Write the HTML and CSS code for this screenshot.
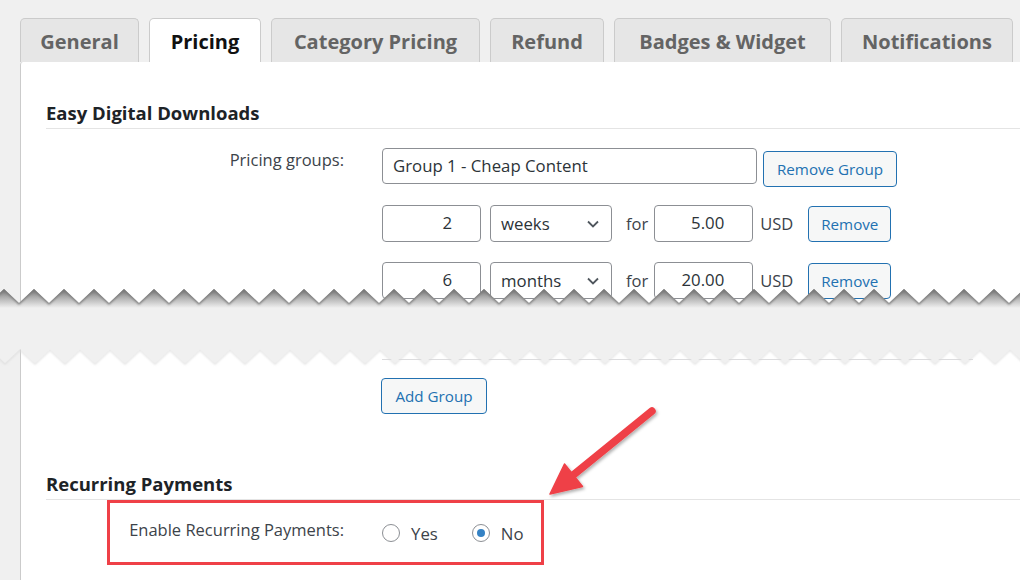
FILE: index.html
```html
<!DOCTYPE html>
<html lang="en">
<head>
<meta charset="utf-8">
<title>Pricing settings</title>
<link rel="stylesheet" href="styles.css">
</head>
<body>
<div class="page">
  <nav class="tabs">
    <div class="tab">General</div>
    <div class="tab active">Pricing</div>
    <div class="tab">Category Pricing</div>
    <div class="tab">Refund</div>
    <div class="tab">Badges &amp; Widget</div>
    <div class="tab">Notifications</div>
  </nav>

  <div class="panel panel-top">
    <h2 class="section-title">Easy Digital Downloads</h2>
    <div class="form-row">
      <div class="label">Pricing groups:</div>
      <div class="field">
        <div class="line line-group">
          <div class="input group-name">Group 1 - Cheap Content</div>
          <div class="btn btn-group">Remove Group</div>
        </div>
        <div class="line line-price">
          <div class="input num">2</div>
          <div class="select">weeks<svg class="chev" viewBox="0 0 12 8"><path d="M1 1.5 6 6.5 11 1.5"/></svg></div>
          <span class="word word-for">for</span>
          <div class="input num price">5.00</div>
          <span class="word word-cur">USD</span>
          <div class="btn btn-remove">Remove</div>
        </div>
        <div class="line line-price">
          <div class="input num">6</div>
          <div class="select">months<svg class="chev" viewBox="0 0 12 8"><path d="M1 1.5 6 6.5 11 1.5"/></svg></div>
          <span class="word word-for">for</span>
          <div class="input num price">20.00</div>
          <span class="word word-cur">USD</span>
          <div class="btn btn-remove">Remove</div>
        </div>
      </div>
    </div>
  </div>

  <div class="cut">
    <svg class="tear" viewBox="0 0 1020 74" preserveAspectRatio="none">
      <defs>
        <clipPath id="mtn">
          <polygon points="-11,14 4,0 19,14 34,0 49,14 64,0 79,14 94,0 109,14 124,0 139,14 154,0 169,14 184,0 199,14 214,0 229,14 244,0 259,14 274,0 289,14 304,0 319,14 334,0 349,14 364,0 379,14 394,0 409,14 424,0 439,14 454,0 469,14 484,0 499,14 514,0 529,14 544,0 559,14 574,0 589,14 604,0 619,14 634,0 649,14 664,0 679,14 694,0 709,14 724,0 739,14 754,0 769,14 784,0 799,14 814,0 829,14 844,0 859,14 874,0 889,14 904,0 919,14 934,0 949,14 964,0 979,14 994,0 1009,14 1024,0 1039,14 1039,40 -11,40"/>
        </clipPath>
        <linearGradient id="shade" gradientUnits="userSpaceOnUse" x1="0" y1="0" x2="0" y2="19">
          <stop offset="0" stop-color="#6f6f6f"/>
          <stop offset="0.4" stop-color="#a9a9a9"/>
          <stop offset="1" stop-color="#f0f0f0"/>
        </linearGradient>
        <filter id="soft" x="-5%" y="-50%" width="110%" height="200%">
          <feGaussianBlur stdDeviation="0.9"/>
        </filter>
        <filter id="softer" x="-5%" y="-50%" width="110%" height="200%">
          <feGaussianBlur stdDeviation="1.2"/>
        </filter>
      </defs>
      <polygon class="mtn-fill" points="-11,14 4,0 19,14 34,0 49,14 64,0 79,14 94,0 109,14 124,0 139,14 154,0 169,14 184,0 199,14 214,0 229,14 244,0 259,14 274,0 289,14 304,0 319,14 334,0 349,14 364,0 379,14 394,0 409,14 424,0 439,14 454,0 469,14 484,0 499,14 514,0 529,14 544,0 559,14 574,0 589,14 604,0 619,14 634,0 649,14 664,0 679,14 694,0 709,14 724,0 739,14 754,0 769,14 784,0 799,14 814,0 829,14 844,0 859,14 874,0 889,14 904,0 919,14 934,0 949,14 964,0 979,14 994,0 1009,14 1024,0 1039,14 1039,40 -11,40"/>
      <g clip-path="url(#mtn)">
        <polyline class="tear-shadow" filter="url(#soft)" points="-11,14 4,0 19,14 34,0 49,14 64,0 79,14 94,0 109,14 124,0 139,14 154,0 169,14 184,0 199,14 214,0 229,14 244,0 259,14 274,0 289,14 304,0 319,14 334,0 349,14 364,0 379,14 394,0 409,14 424,0 439,14 454,0 469,14 484,0 499,14 514,0 529,14 544,0 559,14 574,0 589,14 604,0 619,14 634,0 649,14 664,0 679,14 694,0 709,14 724,0 739,14 754,0 769,14 784,0 799,14 814,0 829,14 844,0 859,14 874,0 889,14 904,0 919,14 934,0 949,14 964,0 979,14 994,0 1009,14 1024,0 1039,14"/>
      </g>
      <polyline class="tear-edge-low" filter="url(#softer)" transform="translate(0,0.8)" points="-10,60 5,74 20,60 35,74 50,60 65,74 80,60 95,74 110,60 125,74 140,60 155,74 170,60 185,74 200,60 215,74 230,60 245,74 260,60 275,74 290,60 305,74 320,60 335,74 350,60 365,74 380,60 395,74 410,60 425,74 440,60 455,74 470,60 485,74 500,60 515,74 530,60 545,74 560,60 575,74 590,60 605,74 620,60 635,74 650,60 665,74 680,60 695,74 710,60 725,74 740,60 755,74 770,60 785,74 800,60 815,74 830,60 845,74 860,60 875,74 890,60 905,74 920,60 935,74 950,60 965,74 980,60 995,74 1010,60 1025,74 1040,60"/>
      <polygon class="paper-gap" points="-10,40 -10,60 5,74 20,60 35,74 50,60 65,74 80,60 95,74 110,60 125,74 140,60 155,74 170,60 185,74 200,60 215,74 230,60 245,74 260,60 275,74 290,60 305,74 320,60 335,74 350,60 365,74 380,60 395,74 410,60 425,74 440,60 455,74 470,60 485,74 500,60 515,74 530,60 545,74 560,60 575,74 590,60 605,74 620,60 635,74 650,60 665,74 680,60 695,74 710,60 725,74 740,60 755,74 770,60 785,74 800,60 815,74 830,60 845,74 860,60 875,74 890,60 905,74 920,60 935,74 950,60 965,74 980,60 995,74 1010,60 1025,74 1040,60 1040,40"/>
    </svg>
  </div>

  <div class="panel panel-bottom">
    <div class="field-only">
      <div class="group-end"></div>
      <div class="btn btn-add">Add Group</div>
    </div>
    <h2 class="section-title title-recurring">Recurring Payments</h2>
    <div class="form-row row-recurring">
      <div class="label">Enable Recurring Payments:</div>
      <div class="radios">
        <span class="radio"></span><span class="radio-label">Yes</span>
        <span class="radio checked"></span><span class="radio-label">No</span>
      </div>
    </div>
  </div>

  <div class="highlight"></div>
  <svg class="arrow" viewBox="530 395 140 115">
    <defs>
      <filter id="ashadow" x="-20%" y="-20%" width="150%" height="150%">
        <feDropShadow dx="1.5" dy="2" stdDeviation="1.8" flood-color="#000" flood-opacity="0.3"/>
      </filter>
    </defs>
    <g filter="url(#ashadow)" class="arrow-g">
      <line x1="652" y1="411" x2="572" y2="476"/>
      <polygon points="550,494 564.5,464 582.5,486.5"/>
    </g>
  </svg>
</div>
</body>
</html>
```

FILE: styles.css
```css
* { box-sizing: border-box; }

html, body {
  margin: 0;
  padding: 0;
  background: #f0f0f0;
}

body {
  font-family: "Open Sans", "Noto Sans", sans-serif;
  color: #3c434a;
  width: 1020px;
  height: 580px;
  overflow: hidden;
}

.page {
  position: relative;
  width: 1020px;
  height: 580px;
  overflow: hidden;
}

/* Tabs */
.tabs {
  display: grid;
  grid-template-columns: 119px 112px 209px 114px 217px 172px;
  column-gap: 10px;
  padding: 18px 0 0 20px;
}

.tab {
  height: 44px;
  border: 1px solid #cbcbcb;
  border-bottom: none;
  border-radius: 5px 5px 0 0;
  background: #e6e6e6;
  color: #646464;
  font-size: 20px;
  font-weight: 700;
  line-height: 46px;
  text-align: center;
  white-space: nowrap;
}

.tab.active {
  background: #fff;
  color: #111;
}

/* Panels */
.panel {
  margin-left: 20px;
  background: #fff;
  border-left: 1px solid #cbcbcb;
  padding-left: 25px;
}

.panel-top {
  height: 241px;
  overflow: hidden;
  border-top-left-radius: 3px;
}

.panel-bottom {
  height: 231px;
}

.section-title {
  margin: 39px 0 0;
  padding-bottom: 3px;
  font-size: 18.5px;
  line-height: 24px;
  font-weight: 700;
  color: #1d2327;
  border-bottom: 1px solid #e4e4e4;
}

.form-row {
  display: grid;
  grid-template-columns: 298px 1fr;
  column-gap: 38px;
  margin-top: 19px;
}

.label {
  font-size: 16.5px;
  line-height: 24px;
  text-align: right;
  color: #3c434a;
}

.line {
  display: flex;
  align-items: center;
}

.line-group {
  align-items: flex-start;
}

.line-price {
  margin-top: 18px;
}

.line-price + .line-price {
  margin-top: 20px;
}

.input {
  height: 36px;
  border: 1px solid #8c8f94;
  border-radius: 4px;
  background: #fff;
  font-size: 16.8px;
  line-height: 34px;
  color: #2c3338;
  padding: 0 10px;
  white-space: nowrap;
}

.group-name {
  width: 375px;
}

.num {
  width: 99px;
  height: 37px;
  text-align: right;
  padding-right: 28px;
}

.price {
  margin-left: 6px;
}

.select {
  position: relative;
  width: 122px;
  height: 37px;
  margin-left: 9px;
  border: 1px solid #8c8f94;
  border-radius: 4px;
  padding-left: 10px;
  font-size: 16.8px;
  line-height: 35px;
  color: #2c3338;
}

.chev {
  position: absolute;
  right: 12px;
  top: 14px;
  width: 12px;
  height: 8px;
  fill: none;
  stroke: #50575e;
  stroke-width: 1.8;
}

.word {
  font-size: 16.5px;
  color: #3c434a;
}

.word-for {
  margin-left: 14px;
}

.word-cur {
  margin-left: 7px;
}

.btn {
  display: flex;
  align-items: center;
  justify-content: center;
  height: 36px;
  border: 1px solid #2271b1;
  border-radius: 4px;
  background: #f6f7f7;
  color: #2271b1;
  font-size: 15.2px;
  white-space: nowrap;
}

.btn-group {
  width: 134px;
  margin-left: 6px;
  margin-top: 3px;
}

.btn-remove {
  width: 83px;
  margin-left: 15px;
}

/* Torn gap */
.cut {
  position: relative;
  height: 46px;
  background: #f0f0f0;
}

.tear {
  position: absolute;
  left: 0;
  top: -14px;
  width: 1020px;
  height: 74px;
  overflow: visible;
}

.paper-gap {
  fill: #f0f0f0;
}

.mtn-fill {
  fill: url(#shade);
}

.tear-shadow {
  fill: none;
  stroke: #7a7a7a;
  stroke-width: 2.5;
}

.tear-edge-low {
  fill: none;
  stroke: #dadada;
  stroke-width: 1.5;
}

/* Bottom part */
.field-only {
  margin-left: 336px;
  padding-top: 10px;
}

.group-end {
  width: 591px;
  border-top: 1px solid #dcdcde;
}

.btn-add {
  width: 106px;
  margin-top: 18px;
  margin-left: -1px;
}

.title-recurring {
  margin-top: 58px;
}

.row-recurring {
  margin-top: 18px;
}

.radios {
  display: flex;
  align-items: center;
  height: 24px;
  margin-top: 3px;
  font-size: 16.8px;
  color: #3c434a;
}

.radio {
  width: 18px;
  height: 18px;
  border: 1px solid #8c8f94;
  border-radius: 50%;
  background: #fff;
  display: flex;
  align-items: center;
  justify-content: center;
}

.radio.checked::after {
  content: "";
  width: 8px;
  height: 8px;
  border-radius: 50%;
  background: #3582c4;
}

.radio-label {
  margin-left: 11px;
  margin-right: 34px;
}

.radio-label:last-child {
  margin-right: 0;
}

/* Annotation */
.highlight {
  position: absolute;
  left: 107px;
  top: 500px;
  width: 437px;
  height: 65px;
  border: 3px solid #ef4047;
}

.arrow {
  position: absolute;
  left: 530px;
  top: 395px;
  width: 140px;
  height: 115px;
}

.arrow-g line {
  stroke: #ef4047;
  stroke-width: 7.5;
  stroke-linecap: round;
}

.arrow-g polygon {
  fill: #ef4047;
  stroke: #ef4047;
  stroke-width: 1.5;
  stroke-linejoin: round;
}
```
